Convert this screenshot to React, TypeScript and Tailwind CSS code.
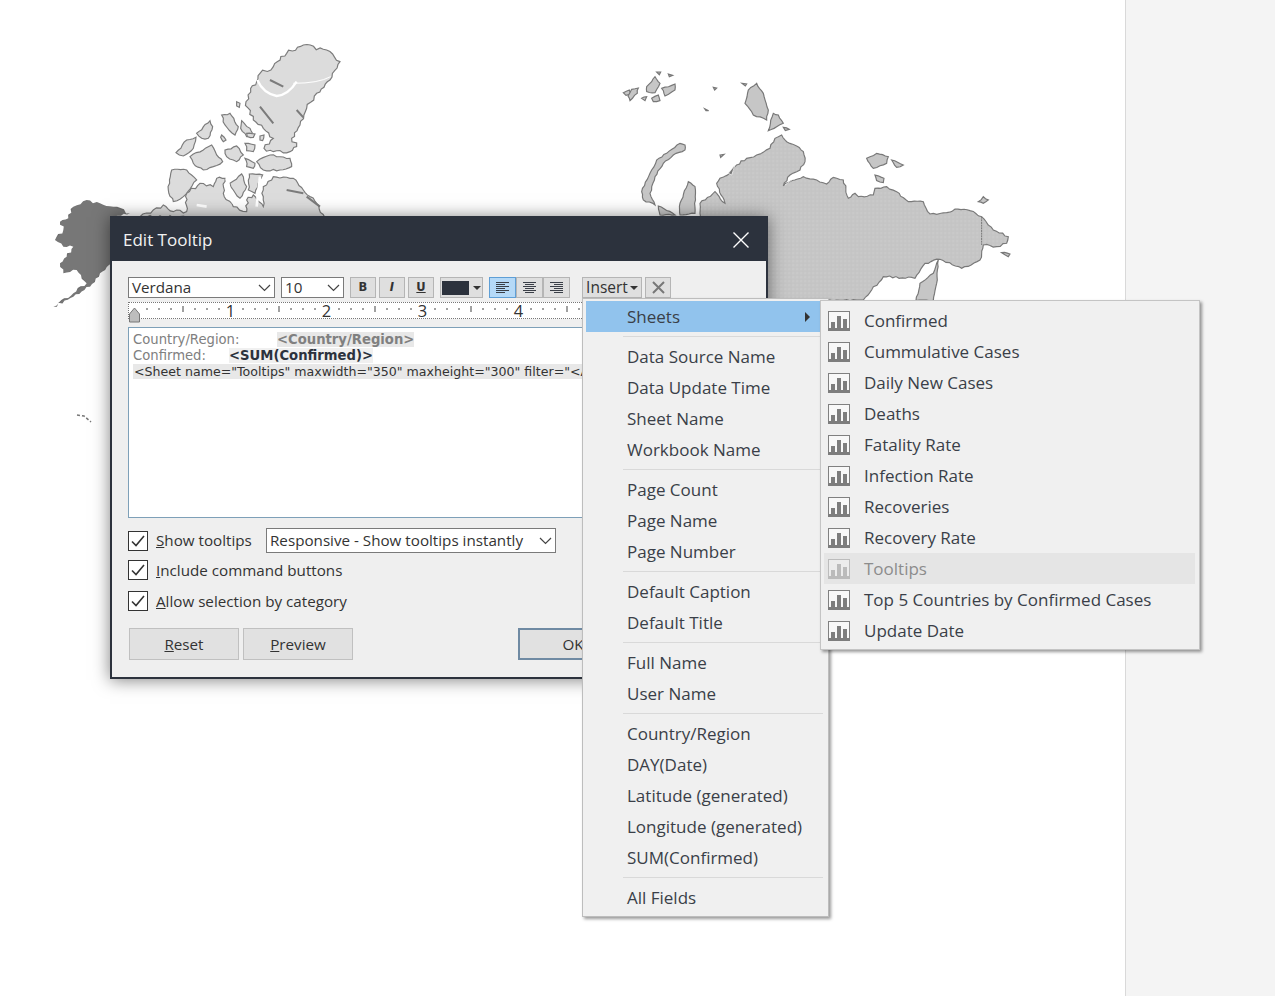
const canadaIslands = [
  '900,95 860,60 790,45 740,70 700,110 660,130 650,155 632,175 618,215 640,270 670,295 700,325 672,355 700,365 750,365 770,350 755,325 780,285 800,235 830,190 870,150',
  '545,255 570,250 595,290 585,315 555,285',
  '605,272 630,295 640,320 620,320 602,295',
  '470,310 510,272 518,290 505,325 485,325',
  '408,368 440,330 468,322 460,355 430,378',
  '450,380 490,360 515,345 530,375 548,395 520,410 490,420 460,400',
  '555,360 590,348 610,375 590,395 560,380',
  '615,340 645,345 640,365 620,362',
  '650,395 690,375 750,385 755,410 720,420 670,420',
  '615,385 645,400 640,415 620,410',
  '395,420 440,420 470,450 430,500 400,515 385,480',
  '570,460 605,432 620,470 600,505 580,480',
  '628,432 668,435 645,490 625,480',
  '545,315 558,330 550,335 542,322',
  '590,215 600,220 598,232 590,228',
  '660,318 672,315 668,332 660,330',
  '620,310 645,312 640,322 622,320',
]

const canadaMain = '300,560 340,540 370,525 400,545 440,545 440,490 480,460 520,470 530,445 555,445 550,490 580,530 620,545 620,510 640,495 670,530 670,470 700,440 760,445 790,480 830,520 860,570'

const alaska = '140,510 100,530 85,565 60,575 70,600 45,630 70,650 100,650 80,680 60,700 70,730 110,720 140,760 100,790 40,830 100,800 150,770 180,730 215,700 215,560 270,550 220,530 180,520'

const russiaIslands = [
  '255,255 240,250 200,280 170,300 150,340 125,395 130,420 165,435 150,400 165,350 190,310 220,285 255,270',
  '470,70 445,90 435,130 460,165 500,180 505,150 490,100',
  '520,160 505,212 530,200 550,190 535,165',
  '800,295 830,280 865,290 860,310 820,325',
  '875,300 910,315 890,322',
  '825,345 852,355 850,368 830,362',
  '1135,425 1150,410 1165,420 1150,430',
  '70,98 88,90 92,102 78,106',
  '95,88 115,84 112,100 90,122 84,108',
  '140,80 155,65 165,50 180,70 165,98 140,95',
  '185,85 225,72 225,90 195,108',
  '125,115 140,110 135,122',
  '155,115 175,105 180,122 160,125',
  '240,430 265,365 285,380 285,460 240,465',
  '175,438 225,465 180,465',
  '1205,578 1230,582 1225,590',
  '426,70 440,72 436,78',
  '170,36 182,36 178,44',
  '205,42 218,46 208,50',
  '340,82 350,84 344,90',
  '314,146 326,152 318,152',
  '550,202 568,208 556,212',
  '360,285 372,283 362,292',
]

const russiaMain = '350,370 360,355 390,340 410,315 440,295 470,285 510,265 525,235 545,225 560,245 590,258 610,275 615,305 600,330 570,345 550,378 575,362 610,350 650,360 680,372 700,352 730,360 745,415 765,400 775,410 820,405 825,385 860,380 890,395 925,425 970,425 990,462 1040,458 1065,447 1110,452 1145,470 1180,510 1225,530 1220,550 1190,560 1150,555 1140,600 1085,625 1020,598 975,610 945,655 850,650 815,690 790,720 300,720 300,430 345,395 375,430'

// 해안선을 들쭉날쭉하게
const roughen = (points: string, amp: number, step = 10) => {
  let seed = points.length
  const rand = () => {
    seed += 1
    const v = Math.sin(seed * 12.9898) * 43758.5453
    return v - Math.floor(v) - 0.5
  }
  const pts = points.split(' ').map((p) => p.split(',').map(Number))
  const out: string[] = []
  pts.forEach(([x1, y1], i) => {
    const [x2, y2] = pts[(i + 1) % pts.length]
    const len = Math.hypot(x2 - x1, y2 - y1)
    const n = Math.max(1, Math.round(len / step))
    for (let k = 0; k < n; k++) {
      const t = k / n
      const off = k === 0 ? 0 : rand() * amp * 2
      out.push(`${(x1 + (x2 - x1) * t - ((y2 - y1) / len) * off).toFixed(1)},${(y1 + (y2 - y1) * t + ((x2 - x1) / len) * off).toFixed(1)}`)
    }
  })
  return out.join(' ')
}

const WorldMap = () => (
  <svg className="absolute left-0 top-0" width="1125" height="520" viewBox="0 0 1125 520">
    <defs>
      <pattern id="lightDots" width="4" height="4" patternUnits="userSpaceOnUse">
        <rect x="1" y="1" width="1" height="1" fill="#ffffff" opacity="0.55" />
      </pattern>
      <pattern id="darkDots" width="3" height="3" patternUnits="userSpaceOnUse">
        <rect x="1" y="1" width="1" height="1" fill="#ffffff" opacity="0.6" />
      </pattern>
    </defs>
    {/* Canada + Alaska */}
    <g transform="translate(40 30) scale(0.3333)">
      {canadaIslands.map((p, i) => (
        <polygon key={p} points={roughen(p, i === 0 ? 6 : 3)} fill="#dcdcdc" stroke="#7b7b7b" strokeWidth="3.5" />
      ))}
      <polygon points={roughen(canadaMain, 5)} fill="#dcdcdc" stroke="#7b7b7b" strokeWidth="3.5" />
      <path d="M652 150 Q670 190 710 198 Q745 195 770 155" fill="none" stroke="#ffffff" strokeWidth="7" />
      <path d="M760 160 Q835 160 872 140" fill="none" stroke="#ffffff" strokeWidth="3" />
      <path d="M560 445 L580 520 M660 440 L650 530 M470 525 L500 530" fill="none" stroke="#ffffff" strokeWidth="8" />
      <path d="M770 240 L790 262 M690 150 L730 170 M660 230 L700 280 M740 480 L790 490 M800 500 L840 530" fill="none" stroke="#7b7b7b" strokeWidth="6" />
      <polygon points={roughen(alaska, 5)} fill="#6d6d6d" />
      <polygon points={alaska} fill="url(#darkDots)" />
    </g>
    {/* Russia */}
    <g transform="translate(600 60) scale(0.3333)">
      {russiaIslands.map((p) => (
        <polygon key={p} points={roughen(p, 2)} fill="#c6c6c6" stroke="#777777" strokeWidth="3.5" />
      ))}
      <polygon points={roughen(russiaMain, 3)} fill="#c4c4c4" stroke="#777777" strokeWidth="3.5" />
      <polygon points={russiaMain} fill="url(#lightDots)" />
      <polygon points={roughen('1015,600 1000,640 960,670 948,722 1000,722 1012,660', 2)} fill="#c6c6c6" stroke="#777777" strokeWidth="3.5" />
      <path d="M1145 470 V555" fill="none" stroke="#777777" strokeWidth="3" strokeDasharray="6 2" />
      <path d="M385 340 L405 315 L395 345 Z M555 375 L610 335" fill="#777777" stroke="#ffffff" strokeWidth="2" />
    </g>
    <path d="M77 415 L84 416 L91 422" fill="none" stroke="#777777" strokeWidth="1.5" strokeDasharray="3 2" />
  </svg>
)

const Chevron = ({ className = '' }: { className?: string }) => (
  <svg className={className} width="13" height="8" viewBox="0 0 13 8" fill="none" stroke="#444444" strokeWidth="1.2">
    <path d="M1 1 L6.5 6.5 L12 1" />
  </svg>
)

const SelectBox = ({ label, className }: { label: string; className: string }) => (
  <div className={`flex items-center justify-between bg-white border border-[#7a7a7a] pl-[3px] pr-[3px] text-[#333] ${className}`}>
    <span className="whitespace-nowrap">{label}</span>
    <Chevron />
  </div>
)

const ToolButton = ({ children, className = '' }: { children: React.ReactNode; className?: string }) => (
  <div className={`h-[21px] flex items-center justify-center bg-[#dfdfdf] border border-[#b5b5b5] text-[#333] ${className}`}>
    {children}
  </div>
)

const AlignIcon = ({ rows }: { rows: number[][] }) => (
  <svg width="13" height="11" viewBox="0 0 13 11" stroke="#3a3f48" strokeWidth="1">
    {rows.map(([a, b], i) => (
      <path key={i} d={`M${a} ${i * 2 + 0.5} H${b}`} />
    ))}
  </svg>
)

const Check = () => (
  <div className="w-5 h-5 shrink-0 flex items-center justify-center bg-white border border-[#333]">
    <svg width="14" height="12" viewBox="0 0 14 12" fill="none" stroke="#333333" strokeWidth="1.6">
      <path d="M1 6.5 L5 10.5 L13 1" />
    </svg>
  </div>
)

const Ruler = () => {
  const ticks = Array.from({ length: 51 }, (_, i) => 5.5 + i * 12)
  const numbers = [1, 2, 3, 4, 5, 6]
  return (
    <div className="relative h-[17px] mt-[4px] bg-white border border-dotted border-[#777]">
      <svg className="absolute left-0 top-0 overflow-visible" width="620" height="20">
        {ticks.map((x, i) =>
          i % 8 === 0 ? null : i % 4 === 0 ? (
            <rect key={x} x={x} y="3" width="1" height="6" fill="#444444" />
          ) : (
            <rect key={x} x={x} y="5" width="1" height="2" fill="#444444" />
          ),
        )}
        <path d="M0.5 19 V11 L5.5 5 L10.5 11 V19 Z" fill="#bdbdbd" stroke="#777777" />
      </svg>
      {numbers.map((n) => (
        <span
          key={n}
          className="absolute top-[-1px] w-4 -ml-2 text-center text-[16.5px] leading-[17px] text-[#333]"
          style={{ left: 5.5 + n * 96 }}
        >
          {n}
        </span>
      ))}
    </div>
  )
}

const EditTooltip = () => (
  <div className="absolute left-[110px] top-[216px] w-[658px] h-[463px] flex flex-col border-2 border-[#2c323d] bg-[#efefef] shadow-[0_1px_16px_rgba(0,0,0,0.5)] font-['Open_Sans',sans-serif] text-[15.2px] text-[#333]">
    {/* 타이틀 바 */}
    <div className="h-[43px] shrink-0 flex items-center justify-between bg-[#2c323d] pl-[11px] pr-[17px] text-[#f2f2f2] text-[17px]">
      <span>Edit Tooltip</span>
      <svg width="16" height="16" viewBox="0 0 16 16" stroke="#ffffff" strokeWidth="1.4">
        <path d="M0.5 0.5 L15.5 15.5 M15.5 0.5 L0.5 15.5" />
      </svg>
    </div>

    <div className="flex-1 flex flex-col pl-[16px] pr-[16px] pt-[16px]">
      {/* 툴바 */}
      <div className="flex items-center h-[21px]">
        <SelectBox label="Verdana" className="w-[147px] h-[21px] pl-1" />
        <SelectBox label="10" className="w-[63px] h-[21px] ml-[6px] pl-1" />
        <ToolButton className="w-[26px] ml-[6px] font-bold text-[11.5px] font-['DejaVu_Sans',sans-serif]">B</ToolButton>
        <ToolButton className="w-[26px] ml-[3px] font-bold italic text-[11.5px] font-['DejaVu_Sans',sans-serif]">I</ToolButton>
        <ToolButton className="w-[26px] ml-[3px] font-bold underline text-[11.5px] font-['DejaVu_Sans',sans-serif]">U</ToolButton>
        <ToolButton className="w-[43px] ml-[6px] gap-[4px]">
          <span className="w-[27px] h-[14px] bg-[#2c323d]" />
          <span className="w-0 h-0 border-x-[4px] border-x-transparent border-t-[4px] border-t-[#333]" />
        </ToolButton>
        <ToolButton className="w-[27px] ml-[6px] !bg-[#b5d9f7] !border-[#5f9fd6]">
          <AlignIcon rows={[[0, 13], [0, 9], [0, 13], [0, 9], [0, 13], [0, 9]]} />
        </ToolButton>
        <ToolButton className="w-[27px]">
          <AlignIcon rows={[[0, 13], [2, 11], [0, 13], [2, 11], [0, 13], [2, 11]]} />
        </ToolButton>
        <ToolButton className="w-[27px]">
          <AlignIcon rows={[[0, 13], [4, 13], [0, 13], [4, 13], [0, 13], [4, 13]]} />
        </ToolButton>
        <ToolButton className="w-[60px] ml-[12px] gap-[2px] text-[15.5px]">
          <span>Insert</span>
          <span className="w-0 h-0 border-x-[4px] border-x-transparent border-t-[4px] border-t-[#333]" />
        </ToolButton>
        <ToolButton className="w-[26px] ml-[3px]">
          <svg width="13" height="13" viewBox="0 0 13 13" stroke="#777777" strokeWidth="2">
            <path d="M1 1 L12 12 M12 1 L1 12" />
          </svg>
        </ToolButton>
      </div>

      <Ruler />

      {/* 편집 영역 */}
      <div className="h-[191px] mt-[8px] bg-white border border-[#7ea0b8] px-[4px] pt-[4px] overflow-hidden font-['DejaVu_Sans',sans-serif] text-[13.2px] leading-[16px] whitespace-nowrap">
        <div className="text-[#808080]">
          <span className="inline-block w-[144px]">Country/Region:</span>
          <span className="bg-[#e8e8e8] font-bold">&lt;Country/Region&gt;</span>
        </div>
        <div className="text-[#808080]">
          <span className="inline-block w-[96px]">Confirmed:</span>
          <span className="bg-[#f0f0f0] font-bold text-[#2c323d]">&lt;SUM(Confirmed)&gt;</span>
        </div>
        <div className="text-[12.6px]">
          <span className="bg-[#e8e8e8] text-[#333] pl-px">&lt;Sheet name="Tooltips" maxwidth="350" maxheight="300" filter="&lt;All Fields&gt;"&gt;</span>
        </div>
      </div>

      {/* 옵션 */}
      <div className="flex items-center mt-[10px] h-[25px]">
        <Check />
        <span className="ml-2 w-[110px]"><u>S</u>how tooltips</span>
        <SelectBox label="Responsive - Show tooltips instantly" className="w-[290px] h-[25px]" />
      </div>
      <div className="flex items-center mt-[7px] h-[20px]">
        <Check />
        <span className="ml-2"><u>I</u>nclude command buttons</span>
      </div>
      <div className="flex items-center mt-[11px] h-[20px]">
        <Check />
        <span className="ml-2"><u>A</u>llow selection by category</span>
      </div>

      {/* 하단 버튼 */}
      <div className="flex items-center mt-[17px] pl-px">
        <div className="w-[110px] h-[32px] flex items-center justify-center bg-[#e1e1e1] border border-[#c0c0c0]"><span><u>R</u>eset</span></div>
        <div className="w-[110px] h-[32px] flex items-center justify-center bg-[#e1e1e1] border border-[#c0c0c0] ml-1"><span><u>P</u>review</span></div>
        <div className="w-[110px] h-[32px] flex items-center justify-center bg-[#e1e1e1] border-2 border-[#6f8aa3] ml-[165px]">OK</div>
      </div>
    </div>
  </div>
)

type MenuGroup = string[]

const fieldGroups: MenuGroup[] = [
  ['Data Source Name', 'Data Update Time', 'Sheet Name', 'Workbook Name'],
  ['Page Count', 'Page Name', 'Page Number'],
  ['Default Caption', 'Default Title'],
  ['Full Name', 'User Name'],
  ['Country/Region', 'DAY(Date)', 'Latitude (generated)', 'Longitude (generated)', 'SUM(Confirmed)'],
  ['All Fields'],
]

const sheets = [
  'Confirmed',
  'Cummulative Cases',
  'Daily New Cases',
  'Deaths',
  'Fatality Rate',
  'Infection Rate',
  'Recoveries',
  'Recovery Rate',
  'Tooltips',
  'Top 5 Countries by Confirmed Cases',
  'Update Date',
]

const Separator = () => (
  <div className="h-[9px] flex items-center pl-[37px] pr-[5px]">
    <div className="w-full h-px bg-[#d9d9d9]" />
  </div>
)

const InsertMenu = () => (
  <div className="absolute left-[582px] top-[298px] w-[247px] pt-[2px] pb-[3px] pl-[3px] bg-[#f0f0f0] border border-[#bdbdbd] shadow-[2px_2px_3px_rgba(0,0,0,0.4)] font-['Open_Sans',sans-serif] text-[17px] text-[#3a3f48]">
    <div className="h-[31px] w-[234px] flex items-center justify-between bg-[#91c3ed] pl-[41px] pr-[10px]">
      <span>Sheets</span>
      <span className="w-0 h-0 border-y-[5px] border-y-transparent border-l-[5px] border-l-[#333]" />
    </div>
    {fieldGroups.map((group) => (
      <div key={group[0]}>
        <Separator />
        {group.map((item) => (
          <div key={item} className="h-[31px] flex items-center pl-[41px] whitespace-nowrap">
            {item}
          </div>
        ))}
      </div>
    ))}
  </div>
)

const ChartIcon = ({ faded }: { faded: boolean }) => (
  <svg width="22" height="20" viewBox="0 0 22 20" className={faded ? 'opacity-40' : ''}>
    <rect x="0.5" y="0.5" width="21" height="19" fill="#f8f8f8" stroke="#808080" />
    <rect x="0" y="17" width="22" height="3" fill="#7d7d7d" />
    <rect x="3" y="11" width="4" height="7" fill="#7d7d7d" />
    <rect x="9" y="5" width="4" height="13" fill="#7d7d7d" />
    <rect x="15" y="8" width="4" height="10" fill="#7d7d7d" />
  </svg>
)

const SheetsMenu = () => (
  <div className="absolute left-[820px] top-[300px] w-[380px] h-[350px] pt-[4px] pl-[3px] pr-[4px] bg-[#f0f0f0] border border-[#c4c4c4] shadow-[2px_2px_3px_rgba(0,0,0,0.4)] font-['Open_Sans',sans-serif] text-[17px] text-[#3a3f48]">
    {sheets.map((s) => {
      const faded = s === 'Tooltips'
      return (
        <div key={s} className={`h-[31px] flex items-center pl-[4px] gap-[14px] whitespace-nowrap ${faded ? 'bg-[#e5e5e5] text-[#8c8c8c]' : ''}`}>
          <ChartIcon faded={faded} />
          <span>{s}</span>
        </div>
      )
    })}
  </div>
)

export default function App() {
  return (
    <div className="relative w-[1275px] h-[996px] bg-white overflow-hidden flex justify-end">
      <div className="w-[150px] h-full bg-[#f4f4f4] border-l border-[#d9d9d9]" />
      <WorldMap />
      <EditTooltip />
      <InsertMenu />
      <SheetsMenu />
    </div>
  )
}
